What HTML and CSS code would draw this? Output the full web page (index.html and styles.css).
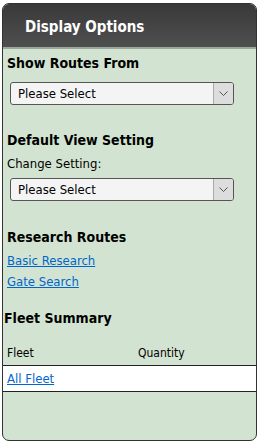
FILE: index.html
```html
<!DOCTYPE html>
<html lang="en">
<head>
  <meta charset="UTF-8">
  <title>Display Options</title>
  <link rel="stylesheet" href="styles.css">
</head>
<body>
  <div class="panel">
    <div class="panel-header">Display Options</div>
    <div class="panel-body">
      <div class="section">
        <div class="section-title">Show Routes From</div>
        <div class="select-box">
          <span class="select-text">Please Select</span>
          <span class="select-arrow">
            <svg width="9" height="6" viewBox="0 0 9 6"><path d="M0.5 0.5 L4.5 4.5 L8.5 0.5" fill="none" stroke="#555" stroke-width="1"/></svg>
          </span>
        </div>
      </div>

      <div class="section">
        <div class="section-title">Default View Setting</div>
        <div class="field-label">Change Setting:</div>
        <div class="select-box">
          <span class="select-text">Please Select</span>
          <span class="select-arrow">
            <svg width="9" height="6" viewBox="0 0 9 6"><path d="M0.5 0.5 L4.5 4.5 L8.5 0.5" fill="none" stroke="#555" stroke-width="1"/></svg>
          </span>
        </div>
      </div>

      <div class="section">
        <div class="section-title">Research Routes</div>
        <a class="nav-link" href="#">Basic Research</a>
        <a class="nav-link" href="#">Gate Search</a>
      </div>

      <div class="fleet-title">Fleet Summary</div>
      <table class="fleet-table">
        <thead>
          <tr><th class="col-fleet">Fleet</th><th>Quantity</th></tr>
        </thead>
        <tbody>
          <tr><td><a href="#">All Fleet</a></td><td></td></tr>
        </tbody>
      </table>
    </div>
  </div>
</body>
</html>
```
FILE: styles.css
```css
body {
  margin: 0;
  font-family: 'DejaVu Sans Condensed', 'DejaVu Sans', sans-serif;
  background: #fff;
}

.panel {
  margin: 3px 0 0 2px;
  width: 255px;
  height: 438px;
  box-sizing: border-box;
  border: 1px solid #333;
  border-radius: 7px;
  background: #d2e4d1;
  overflow: hidden;
}

.panel-header {
  height: 45px;
  box-sizing: border-box;
  padding: 14px 0 0 22px;
  background: linear-gradient(180deg, #393939 0%, #4f4f4f 100%);
  border-bottom: 2px solid #9aa89a;
  color: #fff;
  font-size: 15px;
  font-weight: bold;
}

.panel-body {
  padding-top: 6px;
}

.section {
  padding: 0 0 27px 4px;
}

.section + .section {
  padding-bottom: 28px;
}

.section + .section + .section {
  padding-bottom: 20px;
}

.section-title {
  font-size: 14px;
  font-weight: bold;
  color: #000;
  height: 18px;
}

.field-label {
  font-size: 13px;
  color: #000;
  margin-top: 6px;
}

.select-box {
  display: flex;
  align-items: stretch;
  width: 224px;
  height: 23px;
  box-sizing: border-box;
  margin: 7px 0 0 3px;
  border: 1px solid #555;
  border-radius: 3px;
  background: #f4f4f4;
  overflow: hidden;
}

.section:first-child .select-box {
  margin-top: 9px;
}

.select-text {
  flex: 1;
  padding: 3px 0 0 7px;
  font-size: 13px;
  color: #000;
}

.select-arrow {
  width: 19px;
  border-left: 1px solid #aaa;
  background: #ddd;
  display: flex;
  align-items: center;
  justify-content: center;
}

.nav-link {
  display: block;
  font-size: 13px;
  color: #0066cc;
  text-decoration: underline;
  margin-top: 5px;
  line-height: 17px;
}

.nav-link + .nav-link {
  margin-top: 4px;
}

.fleet-title {
  font-size: 14px;
  font-weight: bold;
  color: #000;
  padding-left: 1px;
}

.fleet-table {
  width: 100%;
  border-collapse: collapse;
  margin-top: 20px;
}

.fleet-table th {
  font-size: 12px;
  font-weight: normal;
  text-align: left;
  padding: 0 0 5px 4px;
  border-bottom: 1px solid #222;
}

.fleet-table th.col-fleet {
  width: 127px;
}

.fleet-table td {
  background: #fff;
  height: 25px;
  padding: 0 0 0 4px;
  font-size: 13px;
  border-bottom: 1px solid #222;
}

.fleet-table a {
  color: #0066cc;
}
```
